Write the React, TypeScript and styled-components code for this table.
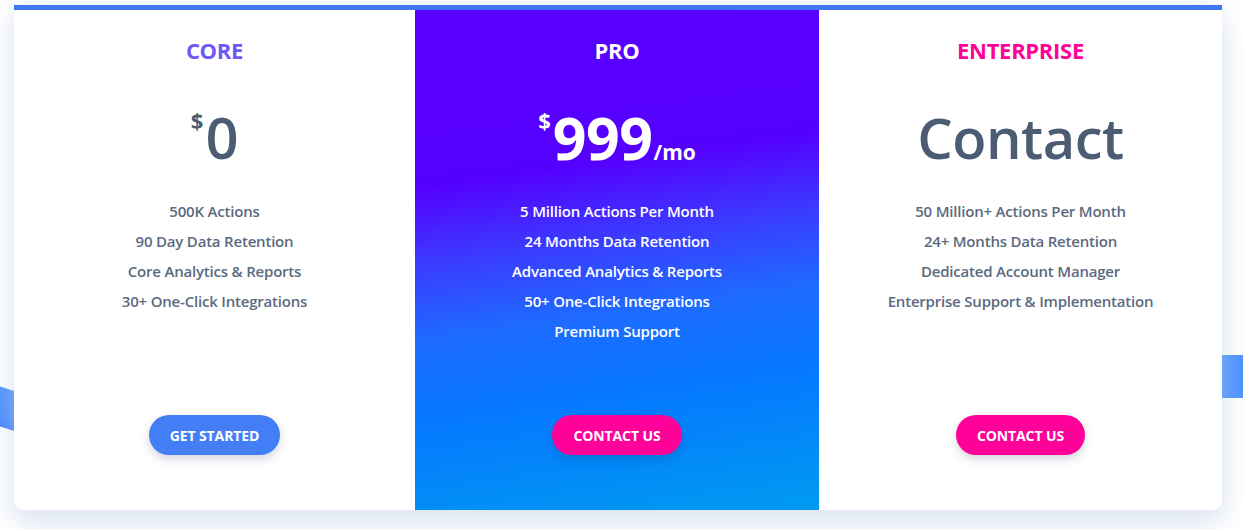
import React from "react";
import styled, { createGlobalStyle } from "styled-components";

const Global = createGlobalStyle`
  html, body { margin: 0; padding: 0; background: #ffffff; }
  body { font-family: "Open Sans", "Noto Sans", Arial, sans-serif; }
  * { box-sizing: border-box; }
`;

const Stage = styled.div`
  position: relative;
  width: 1243px;
  height: 529px;
  padding: 5px 21px 0 14px;
  overflow: hidden;
`;

const Deco = styled.div<{ $side: "left" | "right" }>`
  position: absolute;
  background: #4c92ff;
  ${(p) =>
    p.$side === "left"
      ? `left: -10px; top: 388px; width: 30px; height: 40px; transform: skewY(18deg); background: linear-gradient(160deg,#4f95ff 0%,#4a8cff 70%,#3a7bff 100%);`
      : `right: 0; top: 355px; width: 24px; height: 43px;`}
`;

const Card = styled.div`
  position: relative;
  z-index: 1;
  width: 1208px;
  height: 505px;
  border-top: 5px solid #4176f6;
  border-radius: 0 0 10px 10px;
  background: #fff;
  box-shadow: 0 18px 30px rgba(180, 198, 225, 0.35), 0 0 24px rgba(200, 214, 235, 0.35);
  display: grid;
  grid-template-columns: 401px 404px 403px;
  overflow: hidden;
`;

const Column = styled.div<{ $featured?: boolean }>`
  display: flex;
  flex-direction: column;
  align-items: center;
  padding-top: 28px;
  padding-bottom: 55px;
  color: ${(p) => (p.$featured ? "#ffffff" : "#4b5c73")};
  background: ${(p) =>
    p.$featured
      ? "linear-gradient(172deg, #5a00ff 0%, #5500ff 32%, #3a3cff 46%, #1d6cff 60%, #0579ff 75%, #009bf0 100%)"
      : "#ffffff"};
`;

const Title = styled.div<{ $color: string }>`
  font-family: "Open Sans", sans-serif;
  font-weight: 700;
  font-size: 22px;
  line-height: 24px;
  letter-spacing: -0.3px;
  color: ${(p) => p.$color};
`;

const Price = styled.div`
  margin-top: 40px;
  height: 70px;
  display: flex;
  align-items: baseline;
  font-family: "Open Sans", sans-serif;
  line-height: 70px;
`;

const Currency = styled.span`
  font-size: 22px;
  font-weight: 700;
  align-self: flex-start;
  line-height: 36px;
  margin-right: 2px;
`;

const Amount = styled.span<{ $weight: number; $size: number }>`
  font-size: ${(p) => p.$size}px;
  font-weight: ${(p) => p.$weight};
  letter-spacing: -0.5px;
`;

const Period = styled.span`
  font-size: 21px;
  font-weight: 700;
  margin-left: 1px;
`;

const Features = styled.ul<{ $featured?: boolean }>`
  list-style: none;
  margin: 24px 0 0;
  padding: 0;
  flex: 1;
  text-align: center;
  font-family: "Open Sans", sans-serif;
  font-size: 15px;
  font-weight: 600;
  line-height: 30px;
  letter-spacing: -0.2px;
  color: ${(p) => (p.$featured ? "#ffffff" : "#5b6a7f")};
`;

const Button = styled.button<{ $bg: string }>`
  height: 40px;
  padding: 0 21px;
  border: none;
  border-radius: 20px;
  background: ${(p) => p.$bg};
  color: #fff;
  font-family: "Open Sans", sans-serif;
  font-weight: 700;
  font-size: 14px;
  letter-spacing: -0.1px;
  box-shadow: 0 4px 10px rgba(40, 50, 90, 0.2);
  cursor: pointer;
`;

type Plan = {
  name: string;
  color: string;
  featured?: boolean;
  currency?: string;
  amount: string;
  size: number;
  weight: number;
  period?: string;
  features: string[];
  cta: string;
  ctaBg: string;
};

const plans: Plan[] = [
  {
    name: "CORE",
    color: "#6e58f7",
    currency: "$",
    amount: "0",
    size: 58,
    weight: 600,
    features: ["500K Actions", "90 Day Data Retention", "Core Analytics & Reports", "30+ One-Click Integrations"],
    cta: "GET STARTED",
    ctaBg: "#437ef7",
  },
  {
    name: "PRO",
    color: "#ffffff",
    featured: true,
    currency: "$",
    amount: "999",
    size: 59,
    weight: 700,
    period: "/mo",
    features: [
      "5 Million Actions Per Month",
      "24 Months Data Retention",
      "Advanced Analytics & Reports",
      "50+ One-Click Integrations",
      "Premium Support",
    ],
    cta: "CONTACT US",
    ctaBg: "#ff0099",
  },
  {
    name: "ENTERPRISE",
    color: "#ff0099",
    amount: "Contact",
    size: 56,
    weight: 600,
    features: [
      "50 Million+ Actions Per Month",
      "24+ Months Data Retention",
      "Dedicated Account Manager",
      "Enterprise Support & Implementation",
    ],
    cta: "CONTACT US",
    ctaBg: "#ff0099",
  },
];

export default function App() {
  return (
    <>
      <Global />
      <Stage>
        <Deco $side="left" />
        <Deco $side="right" />
        <Card>
          {plans.map((p) => (
            <Column key={p.name} $featured={p.featured}>
              <Title $color={p.color}>{p.name}</Title>
              <Price>
                {p.currency && <Currency>{p.currency}</Currency>}
                <Amount $weight={p.weight} $size={p.size}>
                  {p.amount}
                </Amount>
                {p.period && <Period>{p.period}</Period>}
              </Price>
              <Features $featured={p.featured}>
                {p.features.map((f) => (
                  <li key={f}>{f}</li>
                ))}
              </Features>
              <Button $bg={p.ctaBg}>{p.cta}</Button>
            </Column>
          ))}
        </Card>
      </Stage>
    </>
  );
}
